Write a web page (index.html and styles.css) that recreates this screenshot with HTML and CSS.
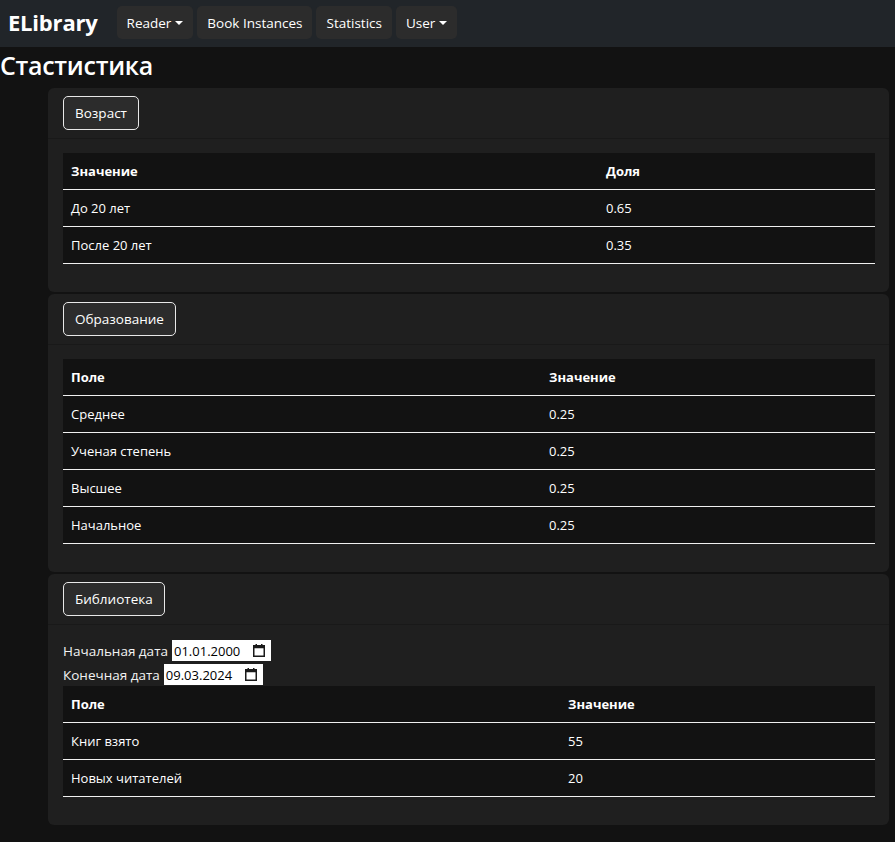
FILE: index.html
```html
<!DOCTYPE html>
<html lang="ru">
<head>
<meta charset="utf-8">
<title>ELibrary</title>
<link rel="stylesheet" href="styles.css">
</head>
<body>
<nav class="navbar">
  <a class="brand">ELibrary</a>
  <ul class="nav">
    <li><a class="nav-btn">Reader<span class="caret"></span></a></li>
    <li><a class="nav-btn">Book Instances</a></li>
    <li><a class="nav-btn">Statistics</a></li>
    <li><a class="nav-btn">User<span class="caret"></span></a></li>
  </ul>
</nav>
<h1 class="page-title">Стастистика</h1>
<main class="cards">
  <section class="card">
    <div class="card-header"><button class="toggle">Возраст</button></div>
    <div class="card-body">
      <table class="table">
        <colgroup><col class="c-age"><col></colgroup>
        <thead><tr><th>Значение</th><th>Доля</th></tr></thead>
        <tbody>
          <tr><td>До 20 лет</td><td>0.65</td></tr>
          <tr><td>После 20 лет</td><td>0.35</td></tr>
        </tbody>
      </table>
    </div>
  </section>
  <section class="card">
    <div class="card-header"><button class="toggle">Образование</button></div>
    <div class="card-body">
      <table class="table">
        <colgroup><col class="c-edu"><col></colgroup>
        <thead><tr><th>Поле</th><th>Значение</th></tr></thead>
        <tbody>
          <tr><td>Среднее</td><td>0.25</td></tr>
          <tr><td>Ученая степень</td><td>0.25</td></tr>
          <tr><td>Высшее</td><td>0.25</td></tr>
          <tr><td>Начальное</td><td>0.25</td></tr>
        </tbody>
      </table>
    </div>
  </section>
  <section class="card">
    <div class="card-header"><button class="toggle">Библиотека</button></div>
    <div class="card-body">
      <div class="date-row first">
        <label>Начальная дата</label>
        <span class="date-input">01.01.2000<svg class="cal" viewBox="0 0 12 13" width="12" height="13"><rect x="0.75" y="1.75" width="10.5" height="10.5" fill="none" stroke="#1a1a1a" stroke-width="1.5"/><rect x="0.75" y="1.75" width="10.5" height="2.5" fill="#1a1a1a"/><rect x="2.5" y="0" width="1.5" height="2.5" fill="#1a1a1a"/><rect x="8" y="0" width="1.5" height="2.5" fill="#1a1a1a"/></svg></span>
      </div>
      <div class="date-row last">
        <label>Конечная дата</label>
        <span class="date-input">09.03.2024<svg class="cal" viewBox="0 0 12 13" width="12" height="13"><rect x="0.75" y="1.75" width="10.5" height="10.5" fill="none" stroke="#1a1a1a" stroke-width="1.5"/><rect x="0.75" y="1.75" width="10.5" height="2.5" fill="#1a1a1a"/><rect x="2.5" y="0" width="1.5" height="2.5" fill="#1a1a1a"/><rect x="8" y="0" width="1.5" height="2.5" fill="#1a1a1a"/></svg></span>
      </div>
      <table class="table">
        <colgroup><col class="c-lib"><col></colgroup>
        <thead><tr><th>Поле</th><th>Значение</th></tr></thead>
        <tbody>
          <tr><td>Книг взято</td><td>55</td></tr>
          <tr><td>Новых читателей</td><td>20</td></tr>
        </tbody>
      </table>
    </div>
  </section>
</main>
</body>
</html>
```
FILE: styles.css
```css
* { box-sizing: border-box; }
html, body {
  margin: 0;
  padding: 0;
  background: #121212;
  color: #f2f2f2;
  font-family: "Open Sans", "Noto Sans", sans-serif;
  font-size: 13px;
  line-height: 20px;
}
.navbar {
  height: 47px;
  background: #212529;
  display: flex;
  align-items: center;
  padding: 0 8px;
}
.brand {
  font-size: 22px;
  font-weight: 700;
  color: #fff;
  margin-right: 19px;
  letter-spacing: -0.2px;
  position: relative;
  top: -2px;
}
.nav {
  list-style: none;
  margin: 0;
  padding: 0;
  display: flex;
  gap: 4px;
  position: relative;
  top: -1px;
}
.nav-btn {
  display: flex;
  align-items: center;
  height: 33px;
  padding: 0 10px;
  background: #2c2c2c;
  border-radius: 5px;
  color: #fff;
  font-size: 13.5px;
}
.caret {
  display: inline-block;
  margin-left: 4px;
  border-top: 4px solid #fff;
  border-left: 4px solid transparent;
  border-right: 4px solid transparent;
}
.page-title {
  margin: 3px 0 7px;
  font-size: 25px;
  line-height: 31px;
  font-weight: 600;
  color: #fff;
  letter-spacing: -0.3px;
}
.cards {
  margin: 0 6px 0 48px;
  display: flex;
  flex-direction: column;
  gap: 2px;
}
.card {
  background: #1f1f1f;
  border-radius: 6px;
}
.card-header {
  padding: 8px 15px;
  border-bottom: 1px solid #191919;
}
.toggle {
  display: block;
  height: 34px;
  padding: 0 11px;
  background: #2c2c2c;
  border: 1px solid #e8e8e8;
  border-radius: 5px;
  color: #fff;
  font-family: inherit;
  font-size: 13.5px;
}
.card-body {
  padding: 14px 14px 12px 15px;
}
.table {
  width: 100%;
  border-collapse: collapse;
  background: #121212;
  margin-bottom: 16px;
}
.table th, .table td {
  text-align: left;
  padding: 8px 8px;
  border-bottom: 1px solid #f0f0f0;
  color: #fff;
}
.table th { font-weight: 700; }
.c-age { width: 535px; }
.c-edu { width: 478px; }
.c-lib { width: 497px; }
.date-row {
  display: flex;
  align-items: center;
  height: 21px;
}
.date-row.first { margin-top: 1px; margin-bottom: 3px; }
.date-row.last { margin-bottom: 1px; }
.date-row label { margin-right: 4px; font-size: 13.5px; }
.date-input {
  display: flex;
  align-items: center;
  justify-content: space-between;
  height: 21px;
  width: 99px;
  padding: 0 6px 0 2px;
  background: #fff;
  color: #000;
  font-family: "Open Sans", sans-serif;
  font-size: 13px;
}
.cal { display: block; }
```
